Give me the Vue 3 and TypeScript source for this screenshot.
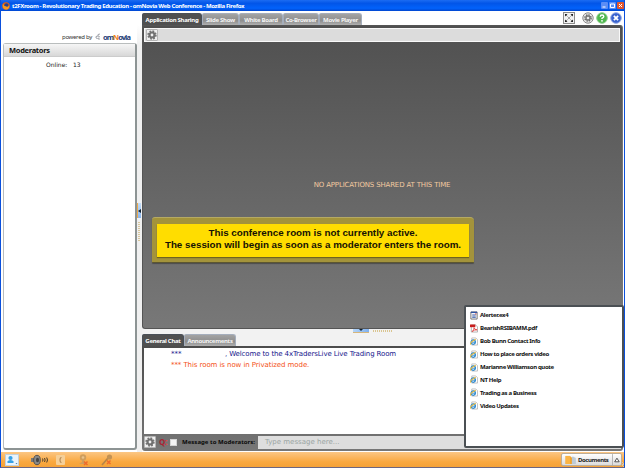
<template>
  <div class="window">
    <header class="titlebar">
      <svg class="fox" viewBox="0 0 9 9">
        <circle cx="4.5" cy="4.5" r="4.2" fill="#e8620c" />
        <circle cx="5" cy="3.8" r="2.5" fill="#26418f" />
        <path d="M1 2 Q2 5 5 5 Q7 6 8 3 Q9 8 4.500 8.500 Q0 8 1 2Z" fill="#f69a22" />
      </svg>
      <span class="title">t2FXroom - Revolutionary Trading Education - omNovia Web Conference - Mozilla Firefox</span>
      <div class="win-buttons">
        <svg viewBox="0 0 7 7"><rect width="7" height="7" rx="1" fill="#5b8df5" /><path d="M1.500 5h3" stroke="#fff" /></svg>
        <svg viewBox="0 0 7 7"><rect width="7" height="7" rx="1" fill="#5b8df5" /><path d="M1.500 2h4v3.500h-4z" stroke="#fff" fill="none" /></svg>
        <svg viewBox="0 0 7 7"><rect width="7" height="7" rx="1" fill="#e4572c" /><path d="M2 2l3 3M5 2l-3 3" stroke="#fff" /></svg>
      </div>
    </header>

    <main class="main">
      <aside class="side">
        <div class="powered">
          <span>powered by</span>
          <svg viewBox="0 0 6 8"><path d="M5 1Q2 1 3 3Q0 3 1 5Q2 6 4 5M3 3l2 1M4 5v2" stroke="#8b8f98" fill="none" stroke-width=".8" /></svg>
          <b class="logo">om<i>N</i>ovia</b>
        </div>
        <section class="moderators">
          <h2>Moderators</h2>
          <p><span class="online">Online:</span><span class="count">{{ onlineCount }}</span></p>
        </section>
      </aside>
      <div class="splitter">
        <div class="grip"><svg viewBox="0 0 3 4"><path d="M3 0v4L0 2z" fill="#123" /></svg></div>
        <div class="dots"></div>
      </div>

      <div class="content">
        <div class="tab-row top">
          <button v-for="tab in tabs" :key="tab.name" class="tab" :class="[tab.cls, { active: tab.name === activeTab }]" @click="activeTab = tab.name">
            <span>{{ tab.name }}</span>
          </button>
          <div class="room-tools">
            <svg class="expand" viewBox="0 0 12 12">
              <rect x=".5" y=".5" width="11" height="11" fill="#f2f2f2" stroke="#8d8d8d" />
              <path d="M2 4.500V2h2.500zM7.500 2H10v2.500zM2 7.500V10h2.500zM10 7.500V10H7.500z" fill="#222" />
              <path d="M3 3l1.500 1.500M9 3L7.500 4.500M3 9l1.500-1.500M9 9L7.500 7.500" stroke="#555" stroke-width=".7" />
              <rect x="5.300" y="5.300" width="1.400" height="1.400" fill="#555" />
            </svg>
            <svg class="round" viewBox="0 0 12 12">
              <circle cx="6" cy="6" r="5.200" fill="#ececec" stroke="#888" />
              <circle cx="6" cy="6" r="3.100" fill="none" stroke="#666" stroke-width="1.400" stroke-dasharray="1.500 .93" />
              <circle cx="6" cy="6" r="2" fill="none" stroke="#777" stroke-width="1.300" />
            </svg>
            <svg class="round" viewBox="0 0 12 12">
              <circle cx="6" cy="6" r="5.300" fill="#4db84d" stroke="#8fce8f" />
              <path d="M4.300 4.700Q4.300 3 6 3Q7.800 3 7.800 4.500Q7.800 5.400 6 6.300V7" stroke="#fff" stroke-width="1.400" fill="none" />
              <circle cx="6" cy="8.800" r=".9" fill="#fff" />
            </svg>
            <svg class="round" viewBox="0 0 12 12">
              <circle cx="6" cy="6" r="5.300" fill="#3a63cf" stroke="#91a8e4" />
              <path d="M3.900 3.900l4.200 4.200M8.100 3.900L3.900 8.100" stroke="#fff" stroke-width="1.800" />
            </svg>
          </div>
        </div>

        <section class="stage">
          <div class="stage-bar">
            <button class="gear">
              <svg viewBox="0 0 10 10">
                <circle cx="5" cy="5" r="3.900" fill="none" stroke="#777" stroke-width="1.600" stroke-dasharray="1.800 1.260" />
                <circle cx="5" cy="5" r="2.500" fill="none" stroke="#707070" stroke-width="2.200" />
              </svg>
            </button>
          </div>
          <div class="stage-body">
            <span class="empty">NO APPLICATIONS SHARED AT THIS TIME</span>
            <div class="notice">
              <div class="notice-text">
                <div class="line-one">This conference room is not currently active.</div>
                <div class="line-two">The session will begin as soon as a moderator enters the room.</div>
              </div>
            </div>
          </div>
        </section>

        <div class="tab-row chat-tabs">
          <button class="tab general active"><span>General Chat</span></button>
          <button class="tab announce"><span>Announcements</span></button>
          <div class="hgrip"><span></span></div>
          <div class="hdots"></div>
        </div>
        <section class="chat">
          <div class="messages">
            <p class="welcome"><span class="stars">***</span><span class="welcome-text">, Welcome to the 4xTradersLive Live Trading Room</span></p>
            <p class="mode">*** This room is now in Privatized mode.</p>
          </div>
          <div class="compose">
            <button class="gear">
              <svg viewBox="0 0 10 10">
                <circle cx="5" cy="5" r="3.900" fill="none" stroke="#777" stroke-width="1.600" stroke-dasharray="1.800 1.260" />
                <circle cx="5" cy="5" r="2.500" fill="none" stroke="#707070" stroke-width="2.200" />
              </svg>
            </button>
            <span class="question">Q<em>:</em></span>
            <span class="check"></span>
            <b class="label">Message to Moderators:</b>
            <div class="field"><span>Type message here...</span></div>
          </div>
        </section>
      </div>
    </main>

    <footer class="statusbar">
      <svg class="st user" viewBox="0 0 14 12">
        <rect x=".5" y=".5" width="13" height="11" fill="#e9f3fb" stroke="#c3d0da" />
        <circle cx="5.500" cy="4" r="2.100" fill="#35a0e6" />
        <path d="M2.500 9V7.500Q3 6 5.500 6Q8 6 8.500 7.500V9z" fill="#35a0e6" />
        <path d="M10.500 9h2l-1 1.300z" fill="#3b7cac" />
      </svg>
      <svg class="st speaker" viewBox="0 0 20 12">
        <path d="M1 4h3l4-3v10L4 8H1z" fill="#777" />
        <ellipse cx="7" cy="6" rx="3.300" ry="4.700" fill="#888" stroke="#444" stroke-width=".8" />
        <ellipse cx="7.500" cy="6" rx="1.500" ry="2.300" fill="#444" />
        <path d="M12.500 4.500q1 1.500 0 3M14.500 4q1.300 2 0 4M16.700 3.500q1.600 2.500 0 5" stroke="#473c2d" fill="none" stroke-width="1" />
      </svg>
      <svg class="st phone" viewBox="0 0 9 10"><rect width="9" height="10" rx="1" fill="#f5cf98" /><path d="M5.500 2.500Q4 2.500 4 5t1.500 2.500" stroke="#b58855" fill="none" stroke-width="1.100" /></svg>
      <svg class="st cam" viewBox="0 0 11 12">
        <circle cx="5" cy="3.500" r="3.200" fill="#cf9d5c" /><circle cx="5" cy="3.500" r="1.300" fill="#e9c28b" />
        <path d="M4 6h2v2l3 2H1l3-2z" fill="#cf9d5c" /><path d="M6 7.500l3.500 3.500M9.500 7.500L6 11" stroke="#ee6c2b" stroke-width="1.500" />
      </svg>
      <svg class="st mic" viewBox="0 0 12 12">
        <path d="M1 11l6-7" stroke="#b68549" stroke-width="1.700" /><circle cx="8.500" cy="3" r="2.600" fill="#c39254" />
        <path d="M6 6.500l3.500 3.500M9.500 6.500L6 10" stroke="#ee6c2b" stroke-width="1.500" />
      </svg>
      <button class="documents" @click="menuOpen = !menuOpen">
        <svg class="folder" viewBox="0 0 12 10">
          <path d="M6 3h5.500v7H6z" fill="#9fb3c4" /><path d="M7.500 2h2l2 2v6h-4z" fill="#bccad6" /><path d="M.5 1h5l2 2v7h-7z" fill="#f5a42c" /><path d="M.5 1h5v9h-5z" fill="#fbb444" />
        </svg>
        <b>Documents</b>
        <svg class="caret" viewBox="0 0 10 13"><path d="M.5 0v13" stroke="#aaa" /><path d="M3 8.500h5L5.500 4.500z" fill="#fff" stroke="#333" stroke-width=".9" /></svg>
      </button>
      <div class="resize"></div>
    </footer>

    <ul v-if="menuOpen" class="doc-menu">
      <li v-for="doc in documents" :key="doc.name">
        <svg v-if="doc.kind === 'file'" viewBox="0 0 9 9"><path d="M1 .5h7v8H1z" fill="#fff" stroke="#666" /><path d="M1 1h7" stroke="#2f55a4" stroke-width="1.500" /><path d="M2.500 4h4M2.500 6.300h4" stroke="#2f55a4" stroke-width="1.200" /><path d="M6.500 2v1.500" stroke="#c33" /></svg>
        <svg v-else-if="doc.kind === 'pdf'" viewBox="0 0 9 9"><path d="M1.500.5h4.500l2.500 2v6h-7z" fill="#fff" stroke="#999" stroke-width=".8" /><path d="M0 0h6v3H0z" fill="#c81e1e" /><path d="M2.500 8Q5 5 4.500 3.500Q5 6 8 6Q5 5.500 2.500 8" stroke="#d22" fill="none" stroke-width=".8" /></svg>
        <svg v-else viewBox="0 0 9 9"><path d="M2 .5h4.500l2 2v6H2z" fill="#fff" stroke="#aaa" stroke-width=".8" /><circle cx="3.600" cy="5.200" r="2.400" fill="#fff" stroke="#2484cd" stroke-width="1.400" /><path d="M1.500 5.300h4.500" stroke="#2484cd" /><path d="M.5 8Q0 5 6.500 2" stroke="#e9b93c" fill="none" stroke-width="1.200" /></svg>
        <span>{{ doc.name }}</span>
      </li>
    </ul>
  </div>
</template>

<script setup lang="ts">
import { ref } from 'vue';

interface Tab {
  name: string;
  cls: string;
}

interface Doc {
  name: string;
  kind: 'file' | 'pdf' | 'link';
}

const onlineCount = ref<number>(13);
const activeTab = ref<string>('Application Sharing');
const menuOpen = ref<boolean>(true);

const tabs: Tab[] = [
  { name: 'Application Sharing', cls: 'sharing' },
  { name: 'Slide Show', cls: 'slides' },
  { name: 'White Board', cls: 'board' },
  { name: 'Co-Browser', cls: 'browser' },
  { name: 'Movie Player', cls: 'movie' },
];

const documents: Doc[] = [
  { name: 'Alerter.ex4', kind: 'file' },
  { name: 'BearishRSIBAMM.pdf', kind: 'pdf' },
  { name: 'Bob Bunn Contact Info', kind: 'link' },
  { name: 'How to place orders video', kind: 'link' },
  { name: 'Marianne Williamson quote', kind: 'link' },
  { name: 'NT Help', kind: 'link' },
  { name: 'Trading as a Business', kind: 'link' },
  { name: 'Video Updates', kind: 'link' },
];
</script>

<style>
body {
  background: #f3f3f3;
  overflow: hidden;
}
</style>

<style scoped>
* {
  box-sizing: border-box;
}

.window {
  position: relative;
  display: flex;
  flex-direction: column;
  width: 625px;
  height: 468px;
  border-left: 1px solid #0b50dc;
  border-right: 1px solid #0b50dc;
  border-bottom: 1px solid #6d6680;
  background: #fff;
  font-family: 'DejaVu Sans', sans-serif;
  font-size: 6px;
  white-space: nowrap;
  overflow: hidden;
}

svg {
  display: block;
  flex: none;
}

button {
  border: 0;
  padding: 0;
  margin: 0;
  font-family: inherit;
}

p,
h2,
ul {
  margin: 0;
  padding: 0;
}

.titlebar {
  display: flex;
  align-items: center;
  flex: none;
  height: 11px;
  padding-left: 1px;
  background: linear-gradient(#1c6cf2, #0255e8 30%, #0262fb 75%, #0046cf);
  color: #fff;
}

.fox {
  width: 8px;
  height: 8px;
  margin-right: 2px;
}

.title {
  font-family: 'Noto Sans', sans-serif;
  font-weight: bold;
  font-size: 6px;
  letter-spacing: -0.36px;
}

.win-buttons {
  display: flex;
  gap: 1px;
  margin-left: auto;
}

.win-buttons svg {
  width: 7px;
  height: 7px;
}

.main {
  display: flex;
  flex: none;
  height: 441px;
}

.side {
  flex: none;
  width: 136px;
  padding: 20px 0 0 2px;
}

.powered {
  display: flex;
  align-items: center;
  height: 12px;
  padding-left: 59px;
  color: #333;
  font-family: 'Noto Sans', sans-serif;
  font-size: 6px;
  letter-spacing: -0.3px;
}

.powered svg {
  width: 6px;
  height: 8px;
  margin: 0 2px 0 3px;
}

.logo {
  font-size: 7.5px;
  letter-spacing: -0.95px;
  color: #243c76;
}

.logo i {
  font-style: normal;
  color: #f08020;
}

.moderators {
  height: 407px;
  border: 1px solid #b9bdbd;
  border-right: 2px solid #8d9494;
  border-bottom: 2px solid #8d9494;
  border-radius: 3px;
  background: #fff;
}

.moderators h2 {
  height: 13px;
  padding-left: 5px;
  line-height: 13px;
  font-family: 'Noto Sans', sans-serif;
  font-size: 7.5px;
  letter-spacing: -0.3px;
  color: #111;
  background: linear-gradient(#f6f6f6, #d8d8d8);
  border-bottom: 1px solid #ccc;
}

.moderators p {
  display: flex;
  height: 16px;
  padding: 4px 0 0 42px;
  line-height: 8px;
  color: #222;
}

.online {
  width: 27px;
}

.splitter {
  display: flex;
  flex-direction: column;
  align-items: center;
  flex: none;
  width: 5px;
  padding: 192px 1px 0 0;
  background: linear-gradient(#fff 14px, #f0f0f0 34px);
}

.grip {
  display: flex;
  align-items: center;
  flex: none;
  width: 4px;
  height: 15px;
  border-left: 1px solid #efaa4a;
  background: linear-gradient(#c3dcf8, #8ab6ee);
}

.grip svg {
  width: 3px;
  height: 4px;
}

.dots {
  width: 2px;
  height: 20px;
  margin-top: 4px;
  background: repeating-linear-gradient(#d9c79c 0 1px, #f0f0f0 1px 2px);
}

.content {
  display: flex;
  flex-direction: column;
  width: 481px;
}

.tab-row {
  display: flex;
  align-items: flex-end;
  flex: none;
}

.top {
  height: 14px;
}

.tab {
  display: flex;
  justify-content: center;
  align-items: center;
  flex: none;
  height: 12px;
  border-radius: 2px 3px 0 0;
  background: linear-gradient(#a3a3a3, #8e8e8e 60%, #b0b0b0);
  border: 1px solid #a5aebc;
  border-bottom: 0;
  color: #f5f5f5;
  font-family: 'Noto Sans', sans-serif;
  font-size: 6px;
  font-weight: bold;
  letter-spacing: -0.3px;
}

.tab.active {
  background: #505050;
  border-color: #4a5058;
  color: #fff;
}

.sharing {
  width: 60px;
}

.slides {
  width: 37px;
}

.board {
  width: 44px;
}

.browser {
  width: 36px;
}

.movie {
  width: 43px;
}

.room-tools {
  display: flex;
  align-items: center;
  gap: 2px;
  height: 14px;
  margin-left: auto;
  padding-right: 1px;
}

.room-tools svg {
  width: 12px;
  height: 12px;
}

.room-tools .expand {
  margin-right: 5px;
}

.stage {
  flex: none;
  height: 304px;
  padding: 2px 2px 0 1px;
  border: 1px solid #555;
  border-right-color: #777;
  border-radius: 0 3px 3px 3px;
  background: linear-gradient(#505050, #787878);
}

.stage-bar {
  height: 14px;
  padding: 0 1px;
  border: 1px solid #f8f8f8;
  background: #dcdcdc;
}

.stage-bar .gear {
  width: 12px;
  height: 12px;
}

.gear {
  display: flex;
  align-items: center;
  justify-content: center;
  flex: none;
  background: #efefef;
  border: 1px solid #b5b5b5;
  border-radius: 1px;
}

.gear svg {
  width: 10px;
  height: 10px;
}

.stage-body {
  display: flex;
  flex-direction: column;
  padding-top: 137px;
}

.empty {
  align-self: center;
  height: 12px;
  line-height: 12px;
  font-size: 7px;
  letter-spacing: -0.16px;
  color: #f2c9a0;
}

.notice {
  width: 322px;
  height: 46px;
  margin: 26px 0 0 8px;
  padding: 6px 5px;
  border-radius: 3px 4px 1px 1px;
  background: #a3933b;
  border-top: 1px solid #b6aa62;
  border-bottom: 1px solid #5c5630;
  box-shadow: 0 1px 1px #4c4c4c;
}

.notice-text {
  height: 33px;
  padding-top: 3px;
  background: #ffdd00;
  box-shadow: 0 1px 1px #6f6420;
  color: #161204;
  font: bold 9.8px/12px 'Liberation Sans', sans-serif;
  text-align: center;
}

.chat-tabs {
  height: 17px;
  background: #f2f2f2;
}

.general {
  width: 42px;
}

.announce {
  width: 52px;
}

.hgrip {
  display: flex;
  justify-content: center;
  align-self: flex-start;
  width: 16px;
  height: 4px;
  margin-left: 117px;
  background: linear-gradient(90deg, #b5d5f8, #7fb0ee);
  border-bottom: 1px solid #d6b67c;
}

.hgrip span {
  height: 2px;
  border-top: 2px solid #123;
  border-left: 2px solid transparent;
  border-right: 2px solid transparent;
}

.hdots {
  align-self: flex-start;
  width: 19px;
  height: 2px;
  margin: 1px 0 0 4px;
  background: repeating-linear-gradient(90deg, #dac590 0 1px, #f2f2f2 1px 2px);
}

.chat {
  display: flex;
  flex-direction: column;
  flex: none;
  height: 105px;
  padding: 2px;
  border-radius: 0 2px 3px 3px;
  background: linear-gradient(#4c4c4c, #777);
}

.messages {
  height: 86px;
  padding: 1px 0 0 27px;
  background: #fff;
  font-size: 7px;
}

.messages p {
  height: 11px;
  line-height: 11px;
}

.welcome {
  display: flex;
  color: #15158c;
}

.welcome-text {
  letter-spacing: -0.12px;
}

.stars {
  width: 54px;
}

.mode {
  color: #f45218;
  letter-spacing: -0.08px;
}

.compose {
  display: flex;
  align-items: center;
  height: 14px;
  margin-top: 1px;
}

.compose .gear {
  width: 12px;
  height: 12px;
}

.question {
  width: 11px;
  margin-left: 3px;
  font: bold 8px/12px 'Noto Sans', sans-serif;
  color: #a92332;
}

.question em {
  font-style: normal;
  color: #f33;
}

.check {
  width: 7px;
  height: 7px;
  background: #f5f5f5;
  border: 1px solid #d5d5d5;
}

.label {
  width: 76px;
  margin-left: 5px;
  font-family: 'Noto Sans', sans-serif;
  font-size: 6px;
  letter-spacing: 0.03px;
  color: #0a0a0a;
}

.field {
  flex: 1;
  height: 13px;
  padding-left: 7px;
  line-height: 12px;
  background: #dedede;
  color: #9aa5a3;
  font-size: 7px;
}

.statusbar {
  display: flex;
  align-items: center;
  flex: 1;
  padding-left: 4px;
  background: linear-gradient(#fbc684, #faa83f 65%, #f5a238);
}

.user {
  width: 14px;
  height: 12px;
}

.speaker {
  width: 20px;
  height: 12px;
  margin-left: 11px;
}

.phone {
  width: 9px;
  height: 10px;
  margin-left: 6px;
}

.cam {
  width: 11px;
  height: 12px;
  margin-left: 13px;
}

.mic {
  width: 12px;
  height: 12px;
  margin-left: 12px;
}

.documents {
  display: flex;
  align-items: center;
  width: 61px;
  height: 13px;
  margin-left: auto;
  padding-left: 3px;
  border: 1px solid #bcae99;
  border-radius: 2px;
  background: linear-gradient(#fff, #dcdcdc);
  font-family: 'Noto Sans', sans-serif;
  font-size: 6px;
  color: #222;
}

.documents b {
  width: 34px;
  text-align: left;
  letter-spacing: -0.4px;
}

.folder {
  width: 11px;
  height: 9px;
  margin-right: 2px;
}

.caret {
  width: 9px;
  height: 12px;
}

.resize {
  align-self: flex-end;
  width: 2px;
  height: 5px;
  background: repeating-linear-gradient(135deg, #d8c7a8 0 1px, #f5a238 1px 2px);
}

.doc-menu {
  position: absolute;
  left: 463px;
  top: 305px;
  width: 160px;
  height: 143px;
  padding: 2px 0 0 4px;
  border: 2px solid #4b5054;
  border-radius: 2px;
  background: #fff;
  list-style: none;
}

.doc-menu li {
  display: flex;
  align-items: center;
  height: 12.9px;
  font-family: 'Noto Sans', sans-serif;
  font-size: 6px;
  font-weight: bold;
  letter-spacing: -0.35px;
  color: #111;
}

.doc-menu svg {
  width: 8px;
  height: 9px;
  margin-right: 2px;
}
</style>
